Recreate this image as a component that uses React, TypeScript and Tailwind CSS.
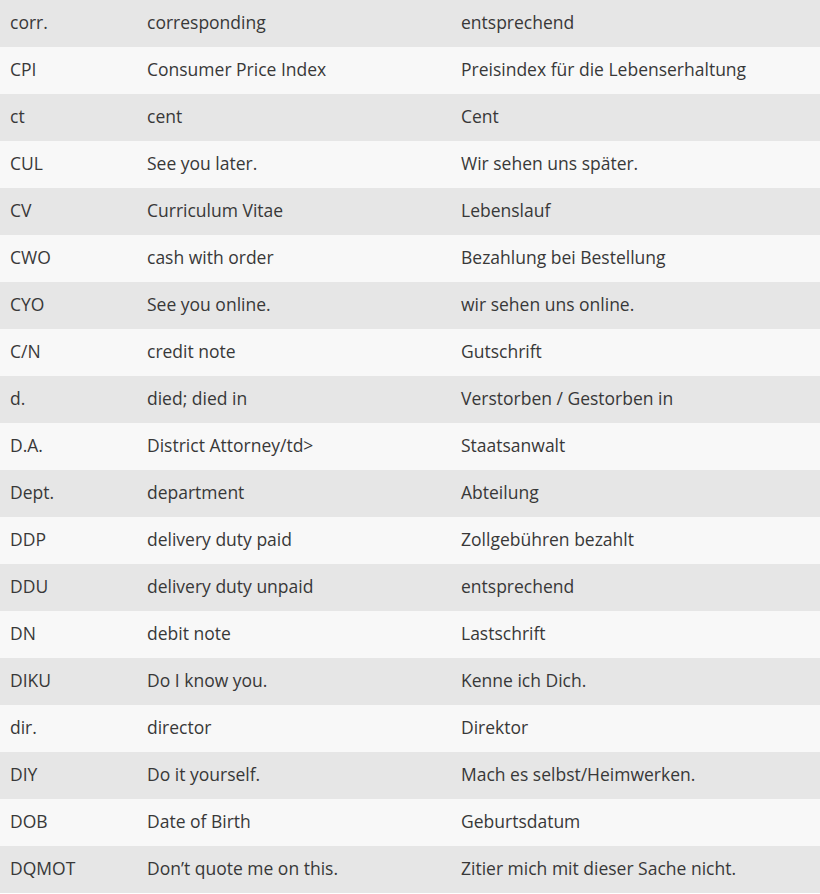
import React from "react";

const rows: [string, string, string][] = [
  ["corr.", "corresponding", "entsprechend"],
  ["CPI", "Consumer Price Index", "Preisindex für die Lebenserhaltung"],
  ["ct", "cent", "Cent"],
  ["CUL", "See you later.", "Wir sehen uns später."],
  ["CV", "Curriculum Vitae", "Lebenslauf"],
  ["CWO", "cash with order", "Bezahlung bei Bestellung"],
  ["CYO", "See you online.", "wir sehen uns online."],
  ["C/N", "credit note", "Gutschrift"],
  ["d.", "died; died in", "Verstorben / Gestorben in"],
  ["D.A.", "District Attorney/td>", "Staatsanwalt"],
  ["Dept.", "department", "Abteilung"],
  ["DDP", "delivery duty paid", "Zollgebühren bezahlt"],
  ["DDU", "delivery duty unpaid", "entsprechend"],
  ["DN", "debit note", "Lastschrift"],
  ["DIKU", "Do I know you.", "Kenne ich Dich."],
  ["dir.", "director", "Direktor"],
  ["DIY", "Do it yourself.", "Mach es selbst/Heimwerken."],
  ["DOB", "Date of Birth", "Geburtsdatum"],
  ["DQMOT", "Don’t quote me on this.", "Zitier mich mit dieser Sache nicht."],
];

export default function App() {
  return (
    <div className="w-[820px] bg-white font-['Open_Sans',sans-serif] text-[17.5px] leading-[24px] text-[#383838]">
      {rows.map((r, i) => (
        <div
          key={i}
          className={`grid h-[47px] grid-cols-[137px_314px_1fr] items-center pb-[4px] pl-[10px] ${
            i % 2 === 0 ? "bg-[#e6e6e6]" : "bg-[#f8f8f8]"
          }`}
        >
          <div>{r[0]}</div>
          <div>{r[1]}</div>
          <div>{r[2]}</div>
        </div>
      ))}
    </div>
  );
}
